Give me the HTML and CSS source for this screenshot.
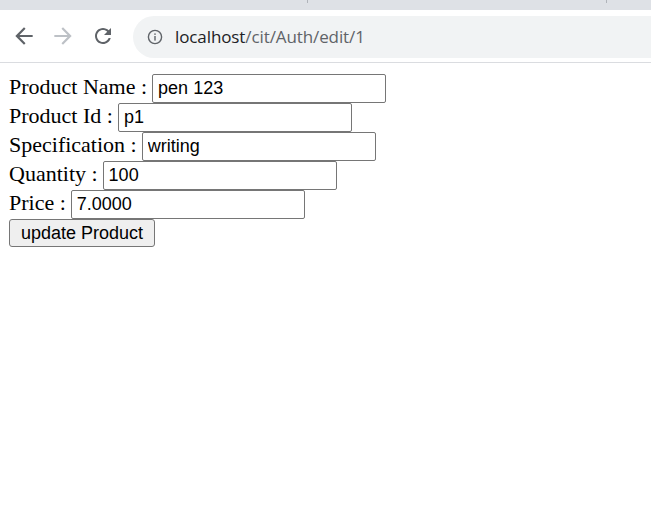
FILE: index.html
```html
<!DOCTYPE html>
<html>
<head>
<meta charset="utf-8">
<link rel="stylesheet" href="styles.css">
</head>
<body>
<div class="chrome">
  <div class="tabstrip">
    <span class="sep sep-a"></span>
    <span class="sep sep-b"></span>
  </div>
  <div class="toolbar">
    <svg class="nav back" viewBox="0 0 24 24"><path d="M20 11H7.83l5.59-5.59L12 4l-8 8 8 8 1.41-1.41L7.83 13H20v-2z"/></svg>
    <svg class="nav fwd" viewBox="0 0 24 24"><path d="M4 11h12.17l-5.59-5.59L12 4l8 8-8 8-1.41-1.41L16.17 13H4v-2z"/></svg>
    <svg class="nav reload" viewBox="0 0 24 24"><path d="M17.65 6.35C16.2 4.9 14.21 4 12 4c-4.42 0-7.99 3.58-7.99 8s3.57 8 7.990 8c3.73 0 6.84-2.55 7.73-6h-2.08c-.82 2.33-3.04 4-5.65 4-3.31 0-6-2.69-6-6s2.69-6 6-6c1.66 0 3.14.69 4.22 1.78L13 11h7V4l-2.35 2.35z"/></svg>
    <div class="omnibox">
      <svg class="info" viewBox="0 0 16 16"><circle cx="8" cy="8" r="6.6" fill="none" stroke="#5f6368" stroke-width="1.4"/><rect x="7.3" y="7" width="1.4" height="4.6" fill="#5f6368"/><rect x="7.3" y="4.4" width="1.4" height="1.5" fill="#5f6368"/></svg>
      <span class="url"><span class="host">localhost</span><span class="path">/cit/Auth/edit/1</span></span>
    </div>
  </div>
</div>
<form class="page">
  <div class="row"><label>Product Name :</label><input type="text" value="pen 123"></div>
  <div class="row"><label>Product Id :</label><input type="text" value="p1"></div>
  <div class="row"><label>Specification :</label><input type="text" value="writing"></div>
  <div class="row"><label>Quantity :</label><input type="text" value="100"></div>
  <div class="row"><label>Price :</label><input type="text" value="7.0000"></div>
  <div class="row"><button type="button">update Product</button></div>
</form>
</body>
</html>
```
FILE: styles.css
```css
html, body {
  margin: 0;
  padding: 0;
  background: #ffffff;
}
.chrome {
  display: flex;
  flex-direction: column;
}
.tabstrip {
  height: 10px;
  background: #dee1e6;
  position: relative;
}
.sep {
  position: absolute;
  top: 0;
  width: 1px;
  height: 3px;
  background: #b0b4ba;
}
.sep-a { left: 307px; }
.sep-b { left: 606px; }
.toolbar {
  height: 52px;
  background: #ffffff;
  border-bottom: 1px solid #dadce0;
  display: flex;
  align-items: center;
  padding-left: 11px;
}
.nav {
  width: 26px;
  height: 26px;
  flex: none;
}
.back { fill: #5f6368; margin-right: 13px; }
.fwd { fill: #bdc1c6; margin-right: 14px; }
.reload { fill: #5f6368; width: 24px; height: 24px; margin-right: 18px; margin-left: 1px; }
.omnibox {
  flex: 1;
  height: 42px;
  margin-top: 1px;
  background: #f1f3f4;
  border-radius: 21px 0 0 21px;
  display: flex;
  align-items: center;
  padding-left: 14px;
}
.info {
  width: 16px;
  height: 16px;
  flex: none;
  margin-right: 12px;
}
.url {
  font-family: "Open Sans", "Noto Sans", sans-serif;
  font-size: 17px;
  letter-spacing: -0.1px;
}
.host { color: #202124; }
.path { color: #5f6368; }
.page {
  display: flex;
  flex-direction: column;
  align-items: flex-start;
  padding: 11px 8px 0 9px;
  margin: 0;
}
.row {
  display: flex;
  align-items: baseline;
  height: 29px;
}
label {
  font-family: "Liberation Serif", "Times New Roman", serif;
  font-size: 22px;
  color: #000;
  margin-right: 5px;
}
input {
  box-sizing: border-box;
  width: 234px;
  height: 29px;
  margin: 0;
  padding: 0 5px;
  border: 1px solid #767676;
  border-radius: 2px;
  font-family: "Liberation Sans", Arial, sans-serif;
  font-size: 18px;
  color: #000;
  background: #fff;
}
button {
  box-sizing: border-box;
  height: 28px;
  margin: 0;
  padding: 0 11px;
  border: 1px solid #767676;
  border-radius: 3px;
  background: #efefef;
  font-family: "Liberation Sans", Arial, sans-serif;
  font-size: 18px;
  color: #000;
}
```
